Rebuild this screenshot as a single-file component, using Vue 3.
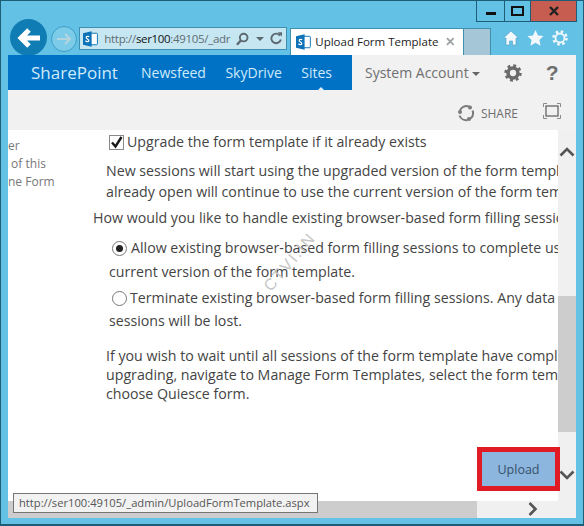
<script setup>
const nav = ['Newsfeed', 'SkyDrive']
</script>

<template>
  <div class="win">
    <div class="caption">
      <div class="btn min"><span class="dash"></span></div>
      <div class="btn max"><span class="box"></span></div>
      <div class="btn close">
        <svg width="12" height="10" viewBox="0 0 12 10"><path d="M2 1l8 8M10 1l-8 8" stroke="#222" stroke-width="2.400" fill="none"/></svg>
      </div>
    </div>
    <div class="toolbar">
      <div class="back">
        <svg width="28" height="24" viewBox="0 0 28 24"><path d="M25 12H7M14 4l-8 8 8 8" stroke="#fff" stroke-width="5" fill="none"/></svg>
      </div>
      <div class="fwd">
        <svg width="16" height="14" viewBox="0 0 16 14"><path d="M1 7h13M9 2l5 5-5 5" stroke="#b4d5df" stroke-width="2" fill="none"/></svg>
      </div>
      <div class="addr">
        <svg class="sp" width="16" height="16" viewBox="0 0 16 16"><rect x="5" y="2" width="10" height="12" rx="1" fill="#fff" stroke="#0d72b8"/><path d="M0 2l9-2v16l-9-2z" fill="#0d72b8"/><path d="M6.500 5.500C4 4.500 3 6 3.500 7S6.500 8.500 6 10 3.500 10.500 2.500 10" stroke="#fff" stroke-width="1.300" fill="none"/></svg>
        <span class="url"><i>http://</i><b>ser100</b><i>:49105/_adr</i></span>
        <svg width="14" height="14" viewBox="0 0 14 14"><circle cx="8" cy="5.500" r="4" fill="none" stroke="#5c6a70" stroke-width="2"/><path d="M5 8.500L1 13" stroke="#5c6a70" stroke-width="2.500"/></svg>
        <span class="caret"></span>
        <svg width="13" height="13" viewBox="0 0 13 13"><path d="M10.500 3.500a5 5 0 1 0 .8 4" fill="none" stroke="#5c6a70" stroke-width="2"/><path d="M8 0h4.500v4.500z" fill="#5c6a70"/></svg>
      </div>
      <div class="tab">
        <svg width="16" height="16" viewBox="0 0 16 16"><rect x="5" y="2" width="10" height="12" rx="1" fill="#fff" stroke="#0d72b8"/><path d="M0 2l9-2v16l-9-2z" fill="#0d72b8"/><path d="M6.500 5.500C4 4.500 3 6 3.500 7S6.500 8.500 6 10 3.500 10.500 2.500 10" stroke="#fff" stroke-width="1.300" fill="none"/></svg>
        <span class="tabt">Upload Form Template</span>
        <svg width="9" height="9" viewBox="0 0 9 9"><path d="M1 1l7 7M8 1l-7 7" stroke="#9a9fa2" stroke-width="1.800"/></svg>
      </div>
      <div class="newtab"></div>
      <div class="tools">
        <svg width="16" height="16" viewBox="0 0 16 16"><path d="M8 1L.5 8H3v7h3.500v-4h3v4H13V8h2.500z" fill="#f2f8fb" stroke="#4d9fc0" stroke-width=".6"/></svg>
        <svg width="17" height="16" viewBox="0 0 17 16"><path d="M8.500 0l2.500 5.500 5.500.6-4.100 3.800 1.200 5.800-5.100-3-5.100 3 1.200-5.800L.5 6.100 6 5.500z" fill="#f2f8fb"/></svg>
        <svg width="16" height="16" viewBox="0 0 16 16"><circle cx="8" cy="8" r="4.500" fill="none" stroke="#f2f8fb" stroke-width="1.800"/><circle cx="8" cy="8" r="6.500" fill="none" stroke="#f2f8fb" stroke-width="2.500" stroke-dasharray="2.500 2.600"/></svg>
      </div>
    </div>

    <div class="page">
      <div class="suite">
        <div class="bluebar">
          <span class="brand">SharePoint</span>
          <span v-for="n in nav" :key="n" class="nav">{{ n }}</span>
          <span class="nav sites">Sites<span class="notch"></span></span>
        </div>
        <div class="acct">
          <span class="acctname">System Account</span>
          <span class="acaret"></span>
          <svg class="gear" width="18" height="18" viewBox="0 0 20 20"><circle cx="10" cy="10" r="5.500" fill="none" stroke="#6a6a6a" stroke-width="4"/><circle cx="10" cy="10" r="8.200" fill="none" stroke="#6a6a6a" stroke-width="3" stroke-dasharray="3.200 3.240"/></svg>
          <span class="help">?</span>
        </div>
      </div>
      <div class="actions">
        <svg class="shareicon" width="18" height="18" viewBox="0 0 18 18"><path d="M3 6.500A7 7 0 0 1 12 2.500M15.500 6.500A7 7 0 0 1 13.500 14.500M10.500 16A7 7 0 0 1 2.500 11.500" fill="none" stroke="#7a7a7a" stroke-width="2"/><circle cx="3" cy="8" r="2" fill="#7a7a7a"/><circle cx="13" cy="3.500" r="2" fill="#7a7a7a"/><circle cx="12" cy="15" r="2" fill="#7a7a7a"/></svg>
        <span class="share">SHARE</span>
        <svg class="focus" width="18" height="16" viewBox="0 0 18 16"><rect x="3" y="3" width="12" height="10" fill="none" stroke="#6f6f6f" stroke-width="1.400"/><path d="M.5 4V.5H4M14 .5h3.500V4M17.500 12v3.500H14M4 15.500H.5V12" fill="none" stroke="#8a8a8a"/></svg>
      </div>
      <div class="content">
        <div class="side">
          <div>er</div>
          <div>&nbsp;of this</div>
          <div>ne Form</div>
        </div>
        <div class="main">
          <div class="check">
            <span class="cb"><svg width="13" height="13" viewBox="0 0 13 13"><path d="M2 6.500l3.500 4L11.500 1" fill="none" stroke="#1a1a1a" stroke-width="2.400"/></svg></span>
            <span>Upgrade the form template if it already exists</span>
          </div>
          <p class="p1">New sessions will start using the upgraded version of the form template. Sessions<br>already open will continue to use the current version of the form template until</p>
          <p class="p2">How would you like to handle existing browser-based form filling sessions?</p>
          <div class="r1">
            <span class="radio on"></span>
            <span>Allow existing browser-based form filling sessions to complete using the</span>
          </div>
          <p class="r1b">current version of the form template.</p>
          <div class="r2">
            <span class="radio"></span>
            <span>Terminate existing browser-based form filling sessions. Any data in these</span>
          </div>
          <p class="r2b">sessions will be lost.</p>
          <p class="p3">If you wish to wait until all sessions of the form template have completed before<br>upgrading, navigate to Manage Form Templates, select the form template, and<br>choose Quiesce form.</p>
        </div>
        <div class="vscroll">
          <svg class="up" width="16" height="10" viewBox="0 0 16 10"><path d="M1.500 8.500L8 2l6.500 6.500" fill="none" stroke="#555" stroke-width="2.600"/></svg>
          <div class="thumb"></div>
          <svg class="down" width="16" height="10" viewBox="0 0 16 10"><path d="M1.500 1.500L8 8l6.500-6.500" fill="none" stroke="#555" stroke-width="2.600"/></svg>
        </div>
        <div class="upwrap"><button class="upload">Upload</button></div>
        <div class="watermark">CTVI.IN</div>
      </div>
      <div class="hscroll">
        <div class="hthumb"></div>
        <svg width="10" height="14" viewBox="0 0 10 14"><path d="M1.500 1L7.500 7l-6 6" fill="none" stroke="#555" stroke-width="2.600"/></svg>
      </div>
      <div class="status">http://ser100:49105/_admin/UploadFormTemplate.aspx</div>
    </div>
  </div>
</template>

<style>
html, body { margin: 0; padding: 0; }
</style>

<style scoped>
.win { position: relative; width: 584px; height: 526px; box-sizing: border-box; background: #64c1e6; border: 1px solid #1d5d78; border-bottom-width: 2px; overflow: hidden; font-family: "Open Sans", "Noto Sans", sans-serif; }
.caption { height: 21px; display: flex; justify-content: flex-end; padding-right: 6px; }
.btn { height: 21px; display: flex; align-items: center; justify-content: center; box-sizing: border-box; border: 1px solid #1d5d78; border-top: 0; border-left-width: 1px; }
.min { width: 29px; }
.max { width: 26px; border-left: 0; }
.close { width: 46px; background: #c75c50; border-left: 0; }
.dash { width: 10px; height: 3px; background: #111; margin-top: 5px; }
.box { width: 9px; height: 6px; border: 2px solid #111; }
.toolbar { height: 33px; display: flex; align-items: flex-start; padding-left: 9px; }
.back { width: 37px; height: 37px; border-radius: 50%; background: #0f7db3; display: flex; align-items: center; justify-content: center; flex: none; margin-top: -3px; }
.fwd { width: 24px; height: 24px; border-radius: 50%; border: 1px solid #3e9fc4; background: #7ccbe8; display: flex; align-items: center; justify-content: center; flex: none; margin: 4px 0 0 4px; }
.addr { width: 208px; height: 23px; box-sizing: border-box; margin: 5px 0 0 2px; border: 1px solid #3f8fae; background: #c6e6f2; display: flex; align-items: center; padding: 0 4px 0 3px; gap: 6px; flex: none; }
.url { font-size: 11.500px; width: 128px; white-space: nowrap; overflow: visible; color: #111; letter-spacing: -.32px; }
.url i { font-style: normal; color: #5f6d73; }
.url b { font-weight: 400; }
.caret { width: 0; height: 0; border: 4px solid transparent; border-top: 4px solid #5c6a70; border-bottom: 0; }
.tab { width: 174px; height: 27px; box-sizing: border-box; margin: 6px 0 0 3px; background: #fff; border: 1px solid #3f8fae; border-bottom: 0; display: flex; align-items: center; padding: 0 8px 1px 5px; gap: 4px; flex: none; }
.tabt { font-size: 11.500px; color: #222; width: 133px; white-space: nowrap; }
.newtab { width: 27px; height: 27px; box-sizing: border-box; margin-top: 6px; background: #a4c6d6; border-right: 1px solid #3f8fae; border-top: 1px solid #3f8fae; flex: none; }
.tools { display: flex; gap: 8px; margin: 8px 0 0 12px; }
.page { position: absolute; left: 7px; top: 54px; width: 568px; height: 463px; background: #fff; }
.suite { height: 35px; display: flex; }
.bluebar { width: 344px; background: #0072c6; display: flex; align-items: center; color: #cfeafa; flex: none; }
.brand { font-size: 17px; margin-left: 23px; width: 110px; }
.nav { font-size: 14px; margin-right: 19.500px; }
.sites { position: relative; margin-right: 0; }
.notch { position: absolute; left: 16px; bottom: -9px; width: 0; height: 0; border: 4px solid transparent; border-bottom: 4px solid #e4eef5; }
.acct { flex: 1; background: #f1f1f2; display: flex; align-items: center; color: #6f6f6f; }
.acctname { font-size: 14px; margin-left: 13px; }
.acaret { width: 0; height: 0; border: 4px solid transparent; border-top: 4px solid #666; border-bottom: 0; margin: 2px 0 0 3px; }
.gear { margin-left: 24px; }
.help { font-size: 21px; font-weight: 700; margin-left: 24px; font-family: "Liberation Sans", sans-serif; }
.actions { height: 40px; background: #f1f1f2; display: flex; align-items: center; justify-content: flex-end; padding-right: 15px; box-sizing: border-box; }
.shareicon { margin-top: 6px; }
.share { font-size: 12px; color: #6f6f6f; margin: 6px 25px 0 6px; }
.focus { margin-top: 2px; }
.content { position: relative; height: 371px; display: flex; overflow: hidden; color: #444; font-size: 14.200px; }
.side { width: 80px; font-size: 12px; color: #777; padding-top: 7px; flex: none; line-height: 18px; }
.side div { white-space: nowrap; }
.main { width: 470px; flex: none; overflow: hidden; white-space: nowrap; line-height: 20px; }
.main p { margin: 0; }
.check { display: flex; align-items: center; margin: 2px 0 0 21px; gap: 3px; }
.cb { width: 13px; height: 13px; border: 1px solid #8a8a8a; display: flex; background: #fff; }
.p1 { margin: 8px 0 0 18px !important; line-height: 21px !important; }
.p2 { margin: 6px 0 0 5px !important; }
.r1 { display: flex; align-items: center; gap: 4px; margin: 10px 0 0 24px; }
.r1b { margin: 4px 0 0 21px !important; }
.r2 { display: flex; align-items: center; gap: 3px; margin: 6px 0 0 24px; }
.r2b { margin: 3px 0 0 21px !important; }
.p3 { margin: 15px 0 0 18px !important; line-height: 19px !important; }
.radio { width: 15px; height: 15px; border: 1px solid #777; border-radius: 50%; box-sizing: border-box; flex: none; background: #fff; position: relative; }
.radio.on::after { content: ""; position: absolute; inset: 3px; background: #222; border-radius: 50%; }
.vscroll { width: 18px; background: #f0f0f0; flex: none; position: relative; }
.up { position: absolute; left: 1px; top: 17px; }
.thumb { position: absolute; left: 0; right: 0; top: 166px; height: 136px; background: #cdcdcd; }
.down { position: absolute; left: 1px; top: 340px; }
.upwrap { position: absolute; left: 469px; top: 317px; }
.upload { display: block; width: 83px; height: 44px; box-sizing: border-box; border: 5px solid #e01b24; background: #8db6de; color: #35506a; font: 12.500px "Open Sans", sans-serif; padding: 0; }
.watermark { position: absolute; left: 242px; top: 123px; width: 80px; transform: rotate(-50deg); font: 16px "Liberation Sans", sans-serif; color: #c6c6c6; letter-spacing: 2px; text-align: center; }
.hscroll { height: 17px; position: relative; background: #f0f0f0; }
.hthumb { position: absolute; left: 0; top: 0; width: 469px; height: 17px; background: #cdcdcd; }
.hscroll svg { position: absolute; left: 520px; top: 1px; }
.status { position: absolute; left: 5px; top: 438px; height: 20px; box-sizing: border-box; border: 1px solid #767676; background: #f2f2f2; color: #555; font-size: 11.200px; line-height: 18px; padding: 0 5px; white-space: nowrap; width: 305px; }
</style>
